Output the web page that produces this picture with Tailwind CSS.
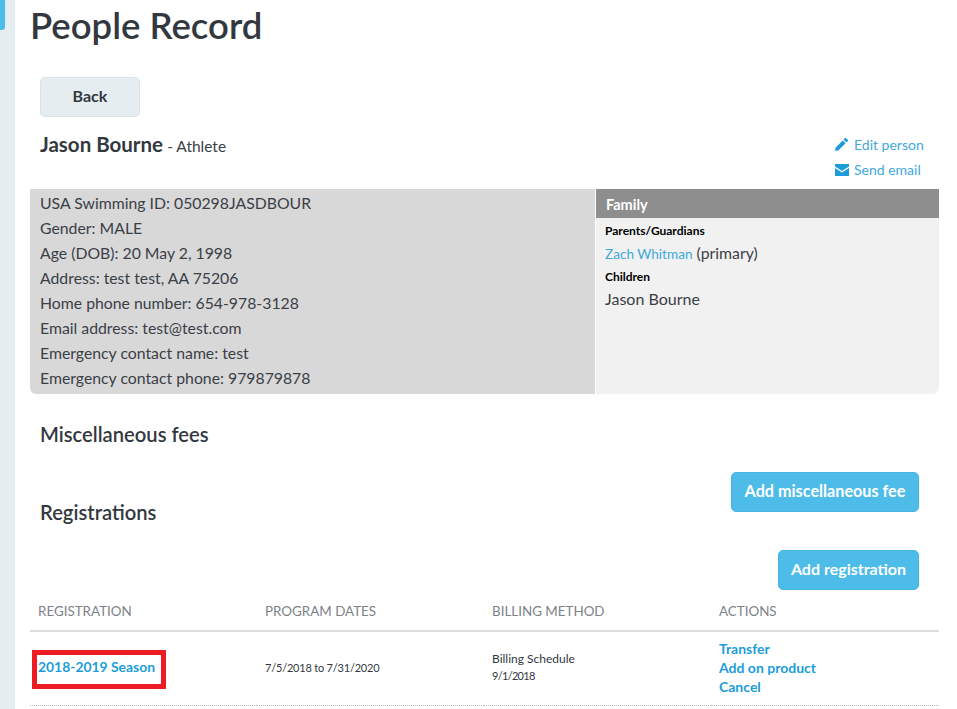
<!DOCTYPE html>
<html lang="en">
<head>
  <meta charset="UTF-8" />
  <title>People Record</title>
  <script src="https://cdn.jsdelivr.net/npm/@tailwindcss/browser@4"></script>
</head>
<body class="bg-white h-[709px] overflow-hidden font-['Lato',sans-serif] text-[#3b4047]">
  <div class="flex h-[709px] overflow-hidden">
    <!-- Sidebar strip -->
    <div class="w-[15px] shrink-0 bg-[#e5edf0]">
      <div class="w-[5px] h-[30px] bg-[#4dbce9] rounded-br-[3px]"></div>
    </div>

    <main class="w-[924px] ml-[15px]">
      <h1 class="h-[77px] pt-[4px] text-[36.500px] leading-[43px] font-semibold text-[#33383f]">People Record</h1>

      <div class="px-[10px]">
        <button class="block w-[100px] h-[40px] pb-[2px] bg-[#e5edf0] border border-[#d8e4e9] rounded-[5px] text-[16px] font-bold text-[#33383f]">Back</button>

        <div class="flex justify-between h-[72px]">
          <div class="pt-[14px] leading-[26px]">
            <span class="text-[20.500px] font-bold text-[#33383f]">Jason Bourne</span>
            <span class="text-[15.500px]"> - Athlete</span>
          </div>
          <div class="w-[89px] pt-[15px] text-[14px] leading-[25px] text-[#3fa9dc] mr-[20px]">
            <a href="#" class="flex items-center gap-[6px] whitespace-nowrap">
              <svg class="w-[13px] h-[13px] shrink-0" viewBox="0 0 13 13"><path fill="#1c9dd9" d="M0 13l.7-3.600 7-7L10.600 5.300l-7 7zM8.500 1.600L9.800.3a1 1 0 0 1 1.400 0l1.500 1.500a1 1 0 0 1 0 1.400l-1.300 1.300z"/></svg>
              Edit person
            </a>
            <a href="#" class="flex items-center gap-[5px] whitespace-nowrap">
              <svg class="w-[14px] h-[12px] shrink-0" viewBox="0 0 14 12"><path fill="#1c9dd9" d="M0 0h14v2.500L7 7 0 2.500zM0 4l7 4.500L14 4v8H0z"/></svg>
              Send email
            </a>
          </div>
        </div>
      </div>

      <!-- Info panel -->
      <div class="flex w-[909px] h-[205px] rounded-b-[6px] overflow-hidden text-[15.800px]">
        <div class="w-[565px] bg-[#d8d8d8] pl-[10px] pt-[1px] leading-[25px]">
          <p>USA Swimming ID: 050298JASDBOUR</p>
          <p>Gender: MALE</p>
          <p>Age (DOB): 20 May 2, 1998</p>
          <p>Address: test test, AA 75206</p>
          <p>Home phone number: 654-978-3128</p>
          <p>Email address: test@test.com</p>
          <p>Emergency contact name: test</p>
          <p>Emergency contact phone: 979879878</p>
        </div>
        <div class="flex-1 ml-[1px] bg-[#f1f1f1]">
          <div class="h-[29px] bg-[#8e8e8e] pl-[10px] text-white text-[14.500px] font-bold leading-[31px]">Family</div>
          <div class="px-[9px]">
            <p class="pt-[5px] text-[12px] leading-[15px] font-bold text-black">Parents/Guardians</p>
            <p class="pt-[3px] leading-[24px]"><a href="#" class="text-[13.600px] text-[#3fa9dc]">Zach Whitman</a> (primary)</p>
            <p class="pt-[3px] text-[12px] leading-[15px] font-bold text-black">Children</p>
            <p class="pt-[3px] text-[16px] leading-[24px]">Jason Bourne</p>
          </div>
        </div>
      </div>

      <!-- Misc fees heading, the buttons sit in the row below -->
      <div class="w-[909px] h-[78px] pl-[10px]">
        <h2 class="pt-[27px] text-[20.200px] leading-[26px] font-semibold text-[#33383f]">Miscellaneous fees</h2>
      </div>

      <div class="flex justify-between w-[909px] h-[118px] pl-[10px] pr-[20px]">
        <h2 class="pt-[27px] text-[20.200px] leading-[26px] font-semibold text-[#33383f]">Registrations</h2>
        <div class="flex flex-col items-end gap-[38px]">
          <button class="w-[188px] h-[40px] pb-[2px] bg-[#4dbce9] border border-[#45b5e3] rounded-[5px] text-white text-[16.200px] font-bold">Add miscellaneous fee</button>
          <button class="w-[141px] h-[40px] pb-[2px] bg-[#4dbce9] border border-[#45b5e3] rounded-[5px] text-white text-[16px] font-bold">Add registration</button>
        </div>
      </div>

      <table class="w-[909px] table-fixed border-collapse">
        <thead>
          <tr class="h-[41px] border-b-2 border-[#dcdcdc] text-left text-[13.400px] text-[#7d8288]">
            <th class="w-[227px] pl-[8px] pt-[3px] font-normal">REGISTRATION</th>
            <th class="w-[227px] pl-[8px] pt-[3px] font-normal">PROGRAM DATES</th>
            <th class="w-[227px] pl-[8px] pt-[3px] font-normal">BILLING METHOD</th>
            <th class="pl-[8px] pt-[3px] font-normal">ACTIONS</th>
          </tr>
        </thead>
        <tbody>
          <tr class="h-[74px] border-b border-dotted border-[#bbbbbb] text-[12px] text-[#33383f]">
            <td class="pl-[8px] pb-[2px]"><a href="#" class="relative text-[13.900px] font-bold text-[#1c9dd9]">2018-2019 Season<span class="absolute -left-[6px] -top-[8px] w-[134px] h-[39px] border-[5px] border-[#ed1c24]"></span></a></td>
            <td class="pl-[8px] text-[11px] tracking-[-0.2px]">7/5/2018 to 7/31/2020</td>
            <td class="pl-[8px] pb-[2px] leading-[17px]">Billing Schedule<br><span class="text-[11px] tracking-[-0.7px]">9/1/2018</span></td>
            <td class="pl-[8px] pb-[2px] text-[14px] leading-[19px] font-bold text-[#1c9dd9]">
              <a href="#" class="block">Transfer</a>
              <a href="#" class="block">Add on product</a>
              <a href="#" class="block">Cancel</a>
            </td>
          </tr>
        </tbody>
      </table>
    </main>
  </div>
</body>
</html>
